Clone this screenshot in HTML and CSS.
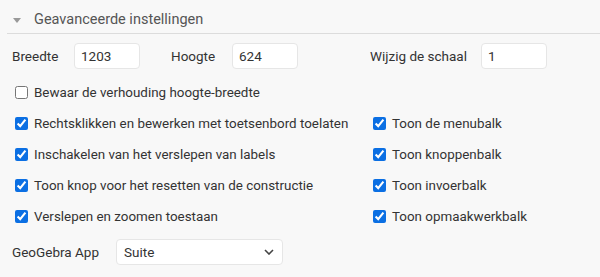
FILE: index.html
```html
<!DOCTYPE html>
<html lang="nl">
<head>
    <meta charset="UTF-8">
    <meta name="viewport" content="width=device-width, initial-scale=1.0">
    <title>Geavanceerde instellingen</title>
    <link rel="stylesheet" href="styles.css">
</head>
<body>
    <div class="panel">
        <!-- Section header -->
        <div class="section-head">
            <span class="caret"></span>
            <span class="section-title">Geavanceerde instellingen</span>
        </div>

        <!-- Size fields -->
        <div class="size-row">
            <label class="lbl lbl-width">Breedte</label>
            <input type="text" class="field" value="1203">
            <label class="lbl lbl-height">Hoogte</label>
            <input type="text" class="field" value="624">
            <label class="lbl lbl-scale">Wijzig de schaal</label>
            <input type="text" class="field" value="1">
        </div>

        <!-- Options -->
        <div class="options">
            <label class="opt"><input type="checkbox"> Bewaar de verhouding hoogte-breedte</label>
            <span></span>
            <label class="opt"><input type="checkbox" checked> Rechtsklikken en bewerken met toetsenbord toelaten</label>
            <label class="opt"><input type="checkbox" checked> Toon de menubalk</label>
            <label class="opt"><input type="checkbox" checked> Inschakelen van het verslepen van labels</label>
            <label class="opt"><input type="checkbox" checked> Toon knoppenbalk</label>
            <label class="opt"><input type="checkbox" checked> Toon knop voor het resetten van de constructie</label>
            <label class="opt"><input type="checkbox" checked> Toon invoerbalk</label>
            <label class="opt"><input type="checkbox" checked> Verslepen en zoomen toestaan</label>
            <label class="opt"><input type="checkbox" checked> Toon opmaakwerkbalk</label>
        </div>

        <!-- App choice -->
        <div class="app-row">
            <label class="lbl lbl-app">GeoGebra App</label>
            <select class="app-select">
                <option>Suite</option>
                <option>Grafisch rekenmachine</option>
                <option>Meetkunde</option>
            </select>
        </div>
    </div>
</body>
</html>
```

FILE: styles.css
```css
body { margin: 0; background-color: #f8f8f8; font-family: Roboto, "Open Sans", sans-serif; color: #333; }
.panel { padding: 0 0 0 0; }

.section-head { display: flex; align-items: center; height: 34px; box-sizing: border-box; padding-top: 6px; margin-left: 7px; border-bottom: 1px solid #dcdcdc; }
.caret { width: 0; height: 0; border-left: 4px solid transparent; border-right: 4px solid transparent; border-top: 5px solid #999; margin: 1px 0 0 6px; }
.section-title { margin-left: 13px; font-size: 14.5px; color: #555; }

.size-row { display: flex; align-items: center; padding: 9px 0 0 12px; }
.lbl { font-size: 13.5px; color: #333; }
.lbl-width { width: 62px; }
.lbl-height { width: 61px; margin-left: 31px; }
.lbl-scale { width: 111px; margin-left: 72px; }
.field { width: 66px; height: 26px; box-sizing: border-box; padding: 0 6px; border: 1px solid #e6e6e6; border-radius: 4px; background: white; font-family: inherit; font-size: 13.5px; color: #333; outline: none; }

.options { display: grid; grid-template-columns: 358px 1fr; grid-auto-rows: 31px; margin: 8px 0 0 11px; }
.opt { display: flex; align-items: center; font-size: 13.4px; color: #333; white-space: nowrap; }
.opt input { width: 13px; height: 13px; margin: 0 6px 0 4px; accent-color: #0b6fe3; }

.app-row { display: flex; align-items: center; padding: 7px 0 0 12px; }
.lbl-app { width: 104px; }
.app-select { width: 167px; height: 26px; padding: 0 7px; border: 1px solid #e6e6e6; border-radius: 4px; background: white url("data:image/svg+xml,%3Csvg xmlns='http://www.w3.org/2000/svg' width='10' height='6'%3E%3Cpath d='M1 1l4 4 4-4' fill='none' stroke='%23444' stroke-width='1.6'/%3E%3C/svg%3E") no-repeat right 8px center; appearance: none; font-family: inherit; font-size: 13.5px; color: #333; }
```
